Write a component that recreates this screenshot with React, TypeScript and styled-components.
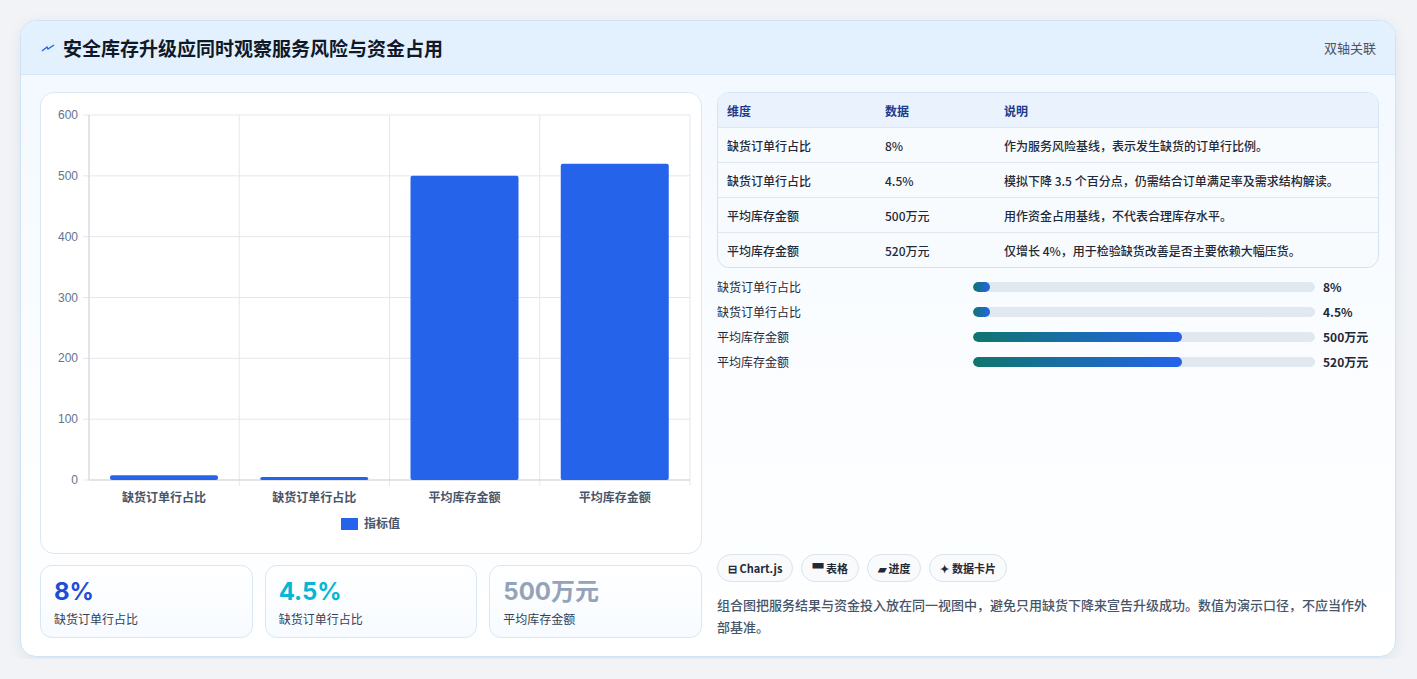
import React from "react";
import styled, { createGlobalStyle } from "styled-components";

const G = createGlobalStyle`
  body { margin: 0; background: #f1f3f6; font-family: "Noto Sans CJK SC", "Noto Sans", sans-serif; }
`;
const Page = styled.div`padding: 20px 20px 0 20px; height: 659px; box-sizing: border-box;`;
const Card = styled.div`
  width: 1376px; height: 637px; box-sizing: border-box; border: 1px solid #cfe3f5; border-radius: 16px;
  background: linear-gradient(180deg, #f2f8ff 0%, #f9fcff 40%, #ffffff 100%); overflow: hidden;
  box-shadow: 0 4px 14px rgba(30,60,100,0.08); display: flex; flex-direction: column;
`;
const Header = styled.div`
  height: 54px; display: flex; align-items: center; justify-content: space-between; padding: 0 19px 0 20px;
  background: #e3f0fd; border-bottom: 1px solid #d3e5f6;
`;
const Title = styled.h1`margin: 0; font-size: 19px; font-weight: 700; color: #111827; display: flex; align-items: center; gap: 8px;`;
const Tag = styled.span`font-size: 13px; color: #475569;`;
const Body = styled.div`display: grid; grid-template-columns: 662px 662px; gap: 15px; padding: 17px 18px 18px 19px; flex: 1;`;
const Col = styled.div`display: flex; flex-direction: column;`;
const ChartBox = styled.div`height: 462px; box-sizing: border-box; border: 1px solid #dde7f2; border-radius: 14px; background: #fff; position: relative;`;
const Stats = styled.div`display: grid; grid-template-columns: repeat(3, 1fr); gap: 12px; margin-top: 11px;`;
const Stat = styled.div`height: 73px; box-sizing: border-box; border: 1px solid #d9e6f3; border-radius: 12px; background: linear-gradient(180deg,#fff,#f7fbff); padding: 11px 13px;`;
const StatVal = styled.div<{ c: string }>`font-size: 24px; font-weight: 700; color: ${p => p.c}; line-height: 30px; font-family: "Inter", "Noto Sans CJK SC", sans-serif;`;
const StatLbl = styled.div`font-size: 12px; color: #334155; margin-top: 3px;`;
const Table = styled.div`border: 1px solid #d6e2ee; border-radius: 12px; overflow: hidden; background: #f8fbfe;`;
const Row = styled.div<{ head?: boolean }>`
  display: grid; grid-template-columns: 158px 119px 1fr; height: 34px; align-items: center; padding-left: 9px;
  font-size: 12px; color: ${p => p.head ? "#1e3a8a" : "#1f2937"}; font-weight: ${p => p.head ? 700 : 500};
  background: ${p => p.head ? "#eaf3fd" : "transparent"}; border-bottom: 1px solid #dfe7f0;
  &:last-child { border-bottom: none; }
`;
const Bars = styled.div`display: flex; flex-direction: column; gap: 9px; margin-top: 10px;`;
const BarRow = styled.div`display: grid; grid-template-columns: 247px 342px 1fr; gap: 0 9px; align-items: center; height: 16px; font-size: 12px; color: #1f2937;`;
const Track = styled.div`height: 10px; background: #e2e8f0; border-radius: 5px; overflow: hidden;`;
const Fill = styled.div`height: 100%; border-radius: 5px; background: linear-gradient(90deg, #0f766e, #2563eb);`;
const BarVal = styled.span`font-weight: 700; margin-left: -1px;`;
const Spacer = styled.div`flex: 1;`;
const Chips = styled.div`display: flex; gap: 8px;`;
const Chip = styled.span`height: 28px; box-sizing: border-box; padding: 0 10px; border: 1px solid #dbe3ec; border-radius: 14px; background: #f8fafc; display: inline-flex; align-items: center; gap: 4px; font-size: 11px; font-weight: 600; color: #1f2937;`;
const Note = styled.p`margin: 12px 0 0; font-size: 13px; line-height: 22px; color: #475569; font-weight: 500;`;

const rows = [
  ["缺货订单行占比", "8%", "作为服务风险基线，表示发生缺货的订单行比例。", 5],
  ["缺货订单行占比", "4.5%", "模拟下降 3.5 个百分点，仍需结合订单满足率及需求结构解读。", 5],
  ["平均库存金额", "500万元", "用作资金占用基线，不代表合理库存水平。", 61],
  ["平均库存金额", "520万元", "仅增长 4%，用于检验缺货改善是否主要依赖大幅压货。", 61],
] as const;

function Chart() {
  const x0 = 48, x1 = 649, yTop = 22, yBot = 387;
  const h = yBot - yTop;
  const vals = [8, 4.5, 500, 520];
  const labels = ["缺货订单行占比", "缺货订单行占比", "平均库存金额", "平均库存金额"];
  const cw = (x1 - x0) / 4;
  return (
    <svg width="660" height="460" style={{ display: "block" }}>
      {[0, 100, 200, 300, 400, 500, 600].map(v => {
        const y = yBot - (v / 600) * h;
        return <g key={v}>
          <line x1={x0 - 6} x2={x1} y1={y} y2={y} stroke="#e5e7eb" />
          <text x={x0 - 11} y={y + 4} textAnchor="end" fontSize="12" fill="#64748b" fontFamily="Liberation Sans, sans-serif">{v}</text>
        </g>;
      })}
      {[0, 1, 2, 3, 4].map(i => <line key={i} x1={x0 + i * cw} x2={x0 + i * cw} y1={yTop} y2={yBot + (i === 0 ? 0 : 6)} stroke="#e5e7eb" />)}
      <line x1={x0} x2={x0} y1={yTop} y2={yBot} stroke="#d1d5db" />
      <line x1={x0} x2={x1} y1={yBot} y2={yBot} stroke="#d1d5db" />
      {vals.map((v, i) => {
        const bh = Math.max(3, (v / 600) * h);
        return <g key={i}>
          <rect x={x0 + i * cw + 21} y={yBot - bh} width={108} height={bh} rx="2" fill="#2563eb" />
          <text x={x0 + i * cw + cw / 2} y={yBot + 22} textAnchor="middle" fontSize="12" fill="#475569" fontWeight="600">{labels[i]}</text>
        </g>;
      })}
      <rect x={300} y={425} width={17} height={12} fill="#2563eb" />
      <text x={323} y={435} fontSize="12" fill="#475569" fontWeight="600">指标值</text>
    </svg>
  );
}

export default function App() {
  return (
    <Page>
      <G />
      <Card>
        <Header>
          <Title>
            <svg width="14" height="10" viewBox="0 0 14 10"><path d="M1 8 L6 4 L7 6 L13 2" stroke="#2563eb" strokeWidth="1.4" fill="none" /></svg>
            安全库存升级应同时观察服务风险与资金占用
          </Title>
          <Tag>双轴关联</Tag>
        </Header>
        <Body>
          <Col>
            <ChartBox><Chart /></ChartBox>
            <Stats>
              <Stat><StatVal c="#1d4ed8">8%</StatVal><StatLbl>缺货订单行占比</StatLbl></Stat>
              <Stat><StatVal c="#06b6d4">4.5%</StatVal><StatLbl>缺货订单行占比</StatLbl></Stat>
              <Stat><StatVal c="#94a3b8">500万元</StatVal><StatLbl>平均库存金额</StatLbl></Stat>
            </Stats>
          </Col>
          <Col>
            <Table>
              <Row head><span>维度</span><span>数据</span><span>说明</span></Row>
              {rows.map((r, i) => <Row key={i}><span>{r[0]}</span><span>{r[1]}</span><span>{r[2]}</span></Row>)}
            </Table>
            <Bars>
              {rows.map((r, i) => (
                <BarRow key={i}><span>{r[0]}</span><Track><Fill style={{ width: `${r[3]}%` }} /></Track><BarVal>{r[1]}</BarVal></BarRow>
              ))}
            </Bars>
            <Spacer />
            <Chips>
              <Chip>⊟ Chart.js</Chip><Chip>▀ 表格</Chip><Chip>▰ 进度</Chip><Chip>✦ 数据卡片</Chip>
            </Chips>
            <Note>组合图把服务结果与资金投入放在同一视图中，避免只用缺货下降来宣告升级成功。数值为演示口径，不应当作外部基准。</Note>
          </Col>
        </Body>
      </Card>
    </Page>
  );
}
